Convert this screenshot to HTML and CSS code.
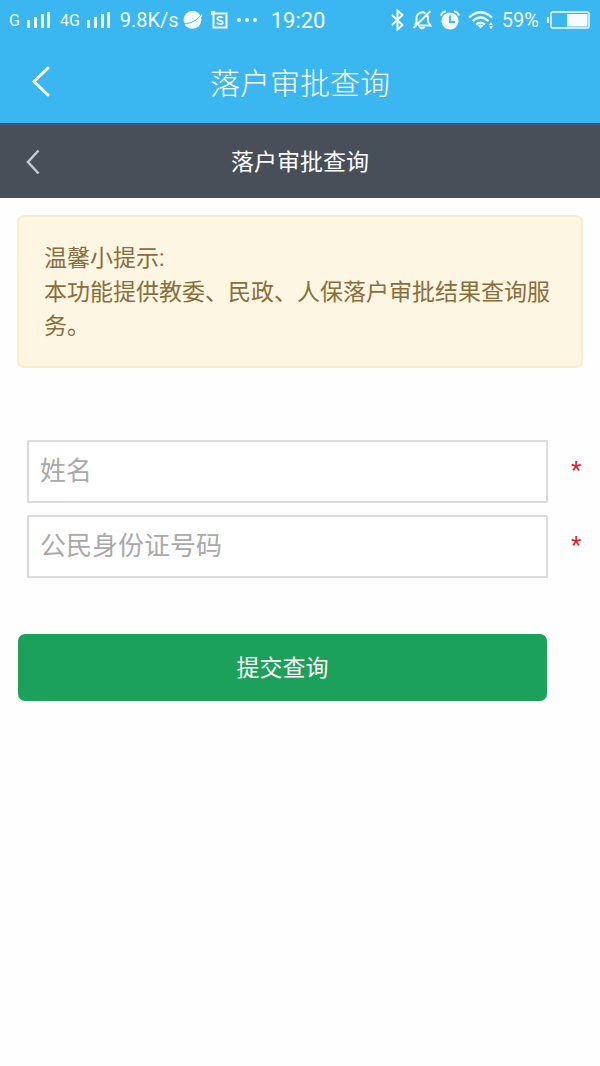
FILE: index.html
```html
<!DOCTYPE html>
<html lang="zh-CN">
<head>
<meta charset="utf-8">
<meta name="viewport" content="width=device-width, initial-scale=1">
<title>落户审批查询</title>
<link rel="stylesheet" href="styles.css">
</head>
<body>
<div class="status">
  <div class="status-group status-left">
    <span class="net">G</span>
    <svg class="signal" width="24" height="18" viewBox="0 0 24 18" fill="currentColor"><path d="M0 9h3v8H0zM7 6h3v11H7zM14 3h3v14h-3zM20 1h3v16h-3z"/></svg>
    <span class="net">4G</span>
    <svg class="signal" width="24" height="18" viewBox="0 0 24 18" fill="currentColor"><path d="M0 9h3v8H0zM7 6h3v11H7zM14 3h3v14h-3zM20 1h3v16h-3z"/></svg>
    <span class="speed">9.8K/s</span>
    <svg class="planet" width="20" height="20" viewBox="0 0 20 20"><circle cx="9.500" cy="9.800" r="9" fill="currentColor"/><path d="M1 13.300C7 14.500 15.500 9.500 17.800 4.800" fill="none" stroke="#3ab6f0" stroke-width="1"/><path d="M2 14.500c6 1.500 14.500-4 17-10" fill="none" stroke="currentColor" stroke-width="1.300"/></svg>
    <svg class="frame" width="18" height="20" viewBox="0 0 18 20" fill="none" stroke="currentColor"><path d="M2.500 3.500h13v14h-13z" stroke-width="2"/><path d="M0 1h4v4H0z" fill="currentColor" stroke="none"/><path d="M11.800 8C11 6.300 6.300 6.300 6.300 8.700c0 2.500 5.500 1.200 5.500 3.700 0 2.200-4.800 2.200-5.800.300" stroke-width="1.800"/></svg>
    <svg class="dots" width="20" height="4" viewBox="0 0 20 4" fill="currentColor"><circle cx="2" cy="2" r="2"/><circle cx="10" cy="2" r="2"/><circle cx="18" cy="2" r="2"/></svg>
    <span class="clock">19:20</span>
  </div>
  <div class="status-group status-right">
    <svg width="13" height="22" viewBox="0 0 13 22" fill="none" stroke="currentColor" stroke-width="2"><path d="M1 6l10.500 10L6.500 20.500V1.500L11.500 6 1 16"/></svg>
    <svg width="20" height="20" viewBox="0 0 20 20" fill="none" stroke="currentColor" stroke-width="2"><path d="M13.500 3.500C10 .8 5 3 4.500 7.500V12L3 14.800M15.500 5.500c.8 2 .4 4.500.6 6.500l2.200 3.500H6M18.500 1L1.500 18"/><path d="M7 17h6c-.5 3-5.500 3-6 0z" fill="currentColor" stroke="none"/></svg>
    <svg width="20" height="20" viewBox="0 0 20 20" fill="none"><circle cx="10" cy="11" r="8.600" fill="currentColor"/><path d="M1 5.500Q2 2 6 1.200M14 1.200q4 .8 5 4.300" stroke="currentColor" stroke-width="2"/><path d="M10 5.500V12h5" stroke="#3ab6f0" stroke-width="1.800"/></svg>
    <svg width="26" height="20" viewBox="0 0 26 20" fill="none" stroke="currentColor" stroke-width="2.200"><path d="M1 7.500Q12.500-3 24 7.500M4.500 11Q12.500 4 20.500 11M8 14.500Q12.500 10.800 17 14.500"/><path d="M9.500 15.500q3-1.800 6 0l-3 3z" fill="currentColor" stroke="none"/><path d="M21 15l2-3 2 3zM21 16h4l-2 3z" fill="currentColor" stroke="none"/></svg>
    <span class="percent">59%</span>
    <svg class="battery" width="43" height="18" viewBox="0 0 43 18"><rect x="4" y="1" width="38" height="16" rx="1.500" fill="none" stroke="currentColor" stroke-width="1.500"/><path d="M20 3h20.500v12.500H20zM0 6h2v6H0z" fill="currentColor"/></svg>
  </div>
</div>
<header class="bar app-bar">
  <button class="back" type="button" aria-label="返回"><svg width="18" height="31" viewBox="0 0 18 31" fill="none" stroke="currentColor" stroke-width="3" stroke-linecap="round"><path d="M16 2L2 15.500 16 29"/></svg></button>
  <h1 class="app-title">落户审批查询</h1>
</header>
<div class="bar page-bar">
  <button class="back" type="button" aria-label="返回上一页"><svg width="14" height="26" viewBox="0 0 14 26" fill="none" stroke="currentColor" stroke-width="2.500"><path d="M12.500 1.500L2 13l10.500 11.500"/></svg></button>
  <h2 class="page-title">落户审批查询</h2>
</div>
<main class="content">
  <section class="notice">
    <p>温馨小提示:</p>
    <p>本功能提供教委、民政、人保落户审批结果查询服务。</p>
  </section>
  <form class="form">
    <div class="field">
      <input class="text-box" type="text" name="name" placeholder="姓名" aria-label="姓名" required>
      <span class="required">*</span>
    </div>
    <div class="field">
      <input class="text-box" type="text" name="id" placeholder="公民身份证号码" aria-label="公民身份证号码" required>
      <span class="required">*</span>
    </div>
    <button class="submit" type="submit">提交查询</button>
  </form>
</main>
</body>
</html>
```
FILE: styles.css
```css
* {
  box-sizing: border-box;
}

body {
  margin: 0;
  background: #fefefe;
  font-family: Roboto, "Noto Sans CJK SC", sans-serif;
}

h1, h2, p {
  margin: 0;
}

svg {
  display: block;
  flex: none;
}

.status {
  display: flex;
  justify-content: space-between;
  height: 40px;
  padding: 0 10px 0 9px;
  background: #3ab6f0;
  color: #f4fcff;
}

.status-group {
  display: flex;
  align-items: center;
  white-space: nowrap;
}

.status-right {
  gap: 8px;
}

.net {
  font-size: 16px;
}

.signal {
  margin: 0 9px 0 7px;
}

.speed {
  font-size: 20px;
}

.planet {
  margin-left: 4px;
}

.frame {
  margin-left: 8px;
}

.dots {
  margin: 0 14px 0 8px;
}

.clock {
  font-size: 22px;
}

.percent {
  font-size: 20px;
}

.bar {
  display: grid;
  grid-template-columns: 64px 1fr 64px;
  align-items: center;
  text-align: center;
}

.app-bar {
  height: 83px;
  background: #3ab6f0;
  color: #fff;
}

.page-bar {
  height: 75px;
  border-top: 2px solid #40587e;
  background: #484f58;
  color: #fff;
}

.back {
  display: flex;
  padding: 0 0 0 32px;
  border: 0;
  background: none;
  color: inherit;
}

.page-bar .back {
  padding-left: 26px;
  color: #c4c9d1;
}

.app-title {
  padding-top: 4px;
  font-size: 30px;
  font-weight: 300;
  line-height: 40px;
}

.page-title {
  padding-top: 2px;
  font-size: 23px;
  font-weight: 400;
  line-height: 34px;
}

.content {
  padding: 17px;
}

.notice {
  padding: 25px 25px 22px;
  border: 2px solid #f7eccb;
  border-radius: 7px;
  background: #fcf6e2;
  color: #8a6d3b;
  font-size: 23px;
  line-height: 34px;
}

.form {
  display: flex;
  flex-direction: column;
  gap: 12px;
  margin-top: 72px;
}

.field {
  display: flex;
  align-items: center;
  padding-left: 10px;
}

.text-box {
  flex: 1;
  min-width: 0;
  height: 63px;
  padding: 0 12px 2px 11px;
  border: 2px solid #dcdcdc;
  border-radius: 0;
  background: #fff;
  color: #333;
  font: inherit;
  font-size: 26px;
}

.text-box::placeholder {
  color: #a9a9a9;
}

.required {
  width: 35px;
  padding: 0 0 4px 23px;
  color: #e8201c;
  font-size: 24px;
}

.submit {
  height: 67px;
  margin: 44px 36px 0 1px;
  padding-bottom: 4px;
  border: 0;
  border-radius: 7px;
  background: #1ba159;
  color: #fff;
  font: inherit;
  font-size: 23px;
}
```
